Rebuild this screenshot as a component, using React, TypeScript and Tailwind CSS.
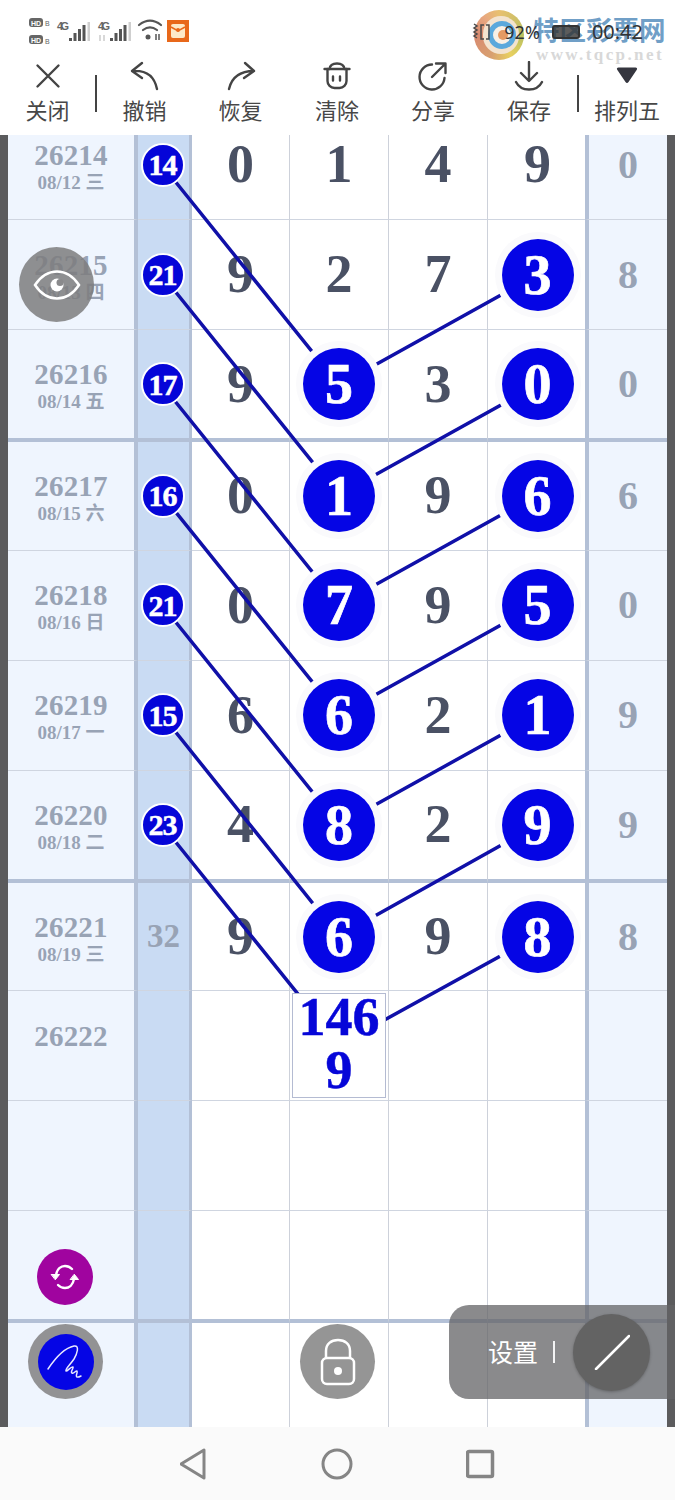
type Row = {
  issue?: string;
  date?: string;
  sum?: number;
  sumPlain?: boolean;
  cells?: (number | { ball: number } | "box" | null)[];
  last?: number;
  thick?: boolean;
  afterThick?: boolean;
};

const b = (ball: number) => ({ ball });

const rows: Row[] = [
  { issue: "26214", date: "08/12 三", sum: 14, cells: [0, 1, 4, 9], last: 0 },
  { issue: "26215", date: "08/13 四", sum: 21, cells: [9, 2, 7, b(3)], last: 8 },
  { issue: "26216", date: "08/14 五", sum: 17, cells: [9, b(5), 3, b(0)], last: 0, thick: true },
  { issue: "26217", date: "08/15 六", sum: 16, cells: [0, b(1), 9, b(6)], last: 6, afterThick: true },
  { issue: "26218", date: "08/16 日", sum: 21, cells: [0, b(7), 9, b(5)], last: 0 },
  { issue: "26219", date: "08/17 一", sum: 15, cells: [6, b(6), 2, b(1)], last: 9 },
  { issue: "26220", date: "08/18 二", sum: 23, cells: [4, b(8), 2, b(9)], last: 9, thick: true },
  { issue: "26221", date: "08/19 三", sum: 32, sumPlain: true, cells: [9, b(6), 9, b(8)], last: 8, afterThick: true },
  { issue: "26222", cells: [null, "box", null, null] },
  {},
  { thick: true },
  { afterThick: true },
];

const lines = [
  "162,165 339,385 537,275",
  "162,275 339,495 537,385",
  "162,385 339,605 537,495",
  "162,495 339,715 537,605",
  "162,605 339,825 537,715",
  "162,715 339,936 537,825",
  "162,825 339,1045 537,936",
];

function TableRow({ row }: { row: Row }) {
  const line = row.thick ? "border-b-4 border-b-[#b3c0d6]" : "border-b border-b-[#cfd5e0]";
  const height = row.thick ? "h-[112px]" : row.afterThick ? "h-[108.3px]" : "h-[110.15px]";
  return (
    <div className={`grid grid-cols-[130px_54px_98px_99px_99px_97px_82px] ${height}`}>
      <div className={`flex flex-col items-center justify-center border-r-4 border-r-[#b3c0d6] bg-[#eff5fe] pt-[5px] text-[#98a3b5] ${line}`}>
        <div className="text-[29px] leading-[30px] font-bold tracking-[0.2px]">{row.issue ?? "\u00a0"}</div>
        <div className="text-[19px] leading-[25px] font-bold">{row.date ?? "\u00a0"}</div>
      </div>
      <div className={`flex items-center justify-center border-r-[3px] border-r-[#b3c0d6] bg-[#c9dbf3] ${line}`}>
        {row.sum !== undefined && row.sumPlain && (
          <span className="text-[33px] font-bold text-[#98a3b5]">{row.sum}</span>
        )}
        {row.sum !== undefined && !row.sumPlain && (
          <span className="relative z-20 -ml-[2px] flex h-[44px] w-[44px] items-center justify-center rounded-full border-2 border-white bg-[#0505d8] text-[30px] font-bold tracking-[-1px] text-white [-webkit-text-stroke:0.5px_white]">
            {row.sum}
          </span>
        )}
      </div>
      {(row.cells ?? [null, null, null, null]).map((cell, i) => (
        <div
          key={i}
          className={`flex items-center justify-center bg-white text-[54px] font-bold text-[#4a5164] ${line} ${i < 3 ? "border-r border-r-[#cdd1da]" : "pl-[2px]"}`}
        >
          {typeof cell === "number" && cell}
          {cell === "box" && (
            <div className="relative z-20 flex h-[105px] w-[94px] flex-col items-center justify-center border border-[#b4bbd2] bg-white pb-[4px] text-[54px] leading-[53px] text-[#0606d8] [-webkit-text-stroke:0.5px_#0606d8]">
              <span>146</span>
              <span>9</span>
            </div>
          )}
          {typeof cell === "object" && cell !== null && (
            <span className="relative z-20 flex h-[72px] w-[72px] items-center justify-center rounded-full bg-[#0505e5] text-[56px] text-white shadow-[0_0_0_7px_#fafafc] [-webkit-text-stroke:0.7px_white]">
              {cell.ball}
            </span>
          )}
        </div>
      ))}
      <div className={`flex items-center justify-center border-l-4 border-l-[#b3c0d6] bg-[#eff5fe] text-[40px] font-bold text-[#98a3b5] ${line}`}>
        {row.last}
      </div>
    </div>
  );
}

function ToolItem({ label, width, children }: { label: string; width: string; children: React.ReactNode }) {
  return (
    <div className={`flex flex-col items-center pt-[8px] ${width}`}>
      <div className="flex h-[36px] items-center justify-center">{children}</div>
      <div className="text-[22px] leading-[30px] text-[#474747]">{label}</div>
    </div>
  );
}

function Signal({ x }: { x: number }) {
  return (
    <g transform={`translate(${x} 0)`}>
      <rect x="0" y="24" width="3" height="3" fill="#555" />
      <rect x="4.500" y="19" width="3" height="8" fill="#555" />
      <rect x="9" y="15" width="3" height="12" fill="#555" />
      <rect x="13.500" y="11" width="3" height="16" fill="#555" />
      <rect x="18.500" y="8" width="2.500" height="19" fill="#cfcfcf" />
    </g>
  );
}

function StatusIcons() {
  return (
    <svg width="165" height="32" viewBox="0 0 165 32">
      <rect x="0" y="4" width="14" height="9" rx="3" fill="#666" />
      <rect x="0" y="21" width="14" height="9" rx="3" fill="#666" />
      <text x="2" y="11.500" fontSize="7" fontWeight="700" fill="#fff" fontFamily="Liberation Sans">HD</text>
      <text x="2" y="28.500" fontSize="7" fontWeight="700" fill="#fff" fontFamily="Liberation Sans">HD</text>
      <text x="16" y="12" fontSize="7" fill="#666" fontFamily="Liberation Sans">B</text>
      <text x="16" y="30" fontSize="7" fill="#666" fontFamily="Liberation Sans">B</text>
      <text x="28" y="16" fontSize="11" fontWeight="700" fill="#666" fontFamily="Liberation Sans" textLength="12">4G</text>
      <Signal x={40} />
      <text x="69" y="16" fontSize="11" fontWeight="700" fill="#666" fontFamily="Liberation Sans" textLength="12">4G</text>
      <path d="M71 21v6M75 21v6" stroke="#ccc" strokeWidth="1.500" />
      <Signal x={81} />
      <g fill="none" stroke="#555" strokeWidth="2.200" strokeLinecap="round">
        <path d="M110 11c7-5.500 15-5.500 22 0" />
        <path d="M114 16c4.500-3.500 9.500-3.500 14 0" />
      </g>
      <circle cx="119" cy="23" r="2.500" fill="#555" />
      <path d="M127 20v6M130 20v6" stroke="#555" strokeWidth="1.500" />
      <rect x="138" y="6" width="22" height="22" fill="#e8681a" />
      <rect x="142" y="10" width="14" height="14" rx="2" fill="#fde9c8" />
      <path d="M142 13l7 4 7-4" fill="none" stroke="#e8681a" strokeWidth="1.500" />
      <circle cx="149" cy="16" r="2" fill="#e8681a" />
    </svg>
  );
}

export default function App() {
  return (
    <div className="relative h-[1500px] w-[675px] overflow-hidden bg-white font-['Liberation_Serif','Noto_Sans_CJK_SC',serif]">
      {/* status bar */}
      <div className="flex h-[50px] items-center justify-between pt-[10px] pl-[29px] font-['Noto_Sans','Noto_Sans_CJK_SC',sans-serif]">
        <StatusIcons />
        <div className="relative z-40 mt-[4px] flex items-center pr-[32px] text-[#333]">
          <svg width="20" height="20" viewBox="0 0 20 20" fill="none" stroke="#4a4a4a" strokeWidth="1.500" className="mr-[12px]">
            <path d="M2 2l3 2-3 2 3 2-3 2 3 2-3 2 3 2" />
            <path d="M12 3H9v14h3M14 3h3v14h-3" />
          </svg>
          <span className="text-[18px] leading-[24px]">92%</span>
          <span className="mx-[12px] flex h-[14px] w-[28px] items-center rounded-[3px] border-2 border-[#333] bg-[#333]/80" />
          <span className="text-[20px] leading-[24px]">00:42</span>
        </div>
      </div>

      {/* toolbar */}
      <div className="flex h-[85px] items-start font-['Noto_Sans_CJK_SC','Noto_Sans',sans-serif]">
        <ToolItem label="关闭" width="w-[95px]">
          <svg width="28" height="28" viewBox="0 0 28 28" fill="none" stroke="#444" strokeWidth="2.400" strokeLinecap="round">
            <path d="M3.500 3.500l21 21M24.500 3.500l-21 21" />
          </svg>
        </ToolItem>
        <div className="mt-[25px] h-[37px] w-[2px] bg-[#444]" />
        <ToolItem label="撤销" width="w-[95px]">
          <svg width="30" height="30" viewBox="0 0 30 30" fill="none" stroke="#444" strokeWidth="2.400" strokeLinecap="round" strokeLinejoin="round">
            <path d="M12 2L2 10l10 7M2 10c12-1 22 3 25 18" />
          </svg>
        </ToolItem>
        <ToolItem label="恢复" width="w-[97px]">
          <svg width="30" height="30" viewBox="0 0 30 30" fill="none" stroke="#444" strokeWidth="2.400" strokeLinecap="round" strokeLinejoin="round">
            <path d="M19 2l9 8-10 7M28 10C16 10 6 15 3 28" />
          </svg>
        </ToolItem>
        <ToolItem label="清除" width="w-[96px]">
          <svg width="28" height="28" viewBox="0 0 28 28" fill="none" stroke="#444" strokeWidth="2.400" strokeLinecap="round" strokeLinejoin="round">
            <path d="M1.500 7h25" />
            <path d="M4.500 7v12a7 7 0 0 0 7 7h5a7 7 0 0 0 7-7V7" />
            <path d="M6.500 7C7 3 10 1.500 14 1.500S21 3 21.500 7" />
            <path d="M10 14.500v4M17 14.500v4" />
          </svg>
        </ToolItem>
        <ToolItem label="分享" width="w-[96px]">
          <svg width="30" height="30" viewBox="0 0 30 30" fill="none" stroke="#444" strokeWidth="2.400" strokeLinecap="round" strokeLinejoin="round">
            <path d="M14 3.500A12.500 12.500 0 1 0 26.500 17" />
            <path d="M14 16L27 3M18 2.500h9.500V12" />
          </svg>
        </ToolItem>
        <ToolItem label="保存" width="w-[96px]">
          <svg width="30" height="30" viewBox="0 0 30 30" fill="none" stroke="#444" strokeWidth="2.400" strokeLinecap="round" strokeLinejoin="round">
            <path d="M15 1v18M7 12l8 8 8-8M2 21c3 6 8 7.500 13 7.500s10-1.500 13-7.500" />
          </svg>
        </ToolItem>
        <div className="mt-[25px] h-[37px] w-[2px] bg-[#444]" />
        <ToolItem label="排列五" width="w-[96px]">
          <svg width="22" height="18" viewBox="0 0 22 18" className="-mt-[2px]">
            <path d="M2.500 1.500h17c1.500 0 2 1 1.300 2.200L12.500 16c-.8 1.200-2.200 1.200-3 0L1.200 3.700C.5 2.500 1 1.500 2.500 1.500z" fill="#35363f" />
          </svg>
        </ToolItem>
      </div>

      {/* chart */}
      <div className="h-[1292px] overflow-hidden bg-white">
        <div className="-mt-[25px] flex">
          <div className="w-[8px] shrink-0 bg-[#5b5b5d]" />
          <div className="w-[659px] shrink-0">
            {rows.map((row, i) => (
              <TableRow key={i} row={row} />
            ))}
          </div>
          <div className="w-[8px] shrink-0 bg-[#5b5b5d]" />
        </div>
      </div>

      {/* nav bar */}
      <div className="flex h-[73px] items-center justify-center gap-[113px] bg-[#fafafa]">
        <svg width="28" height="32" viewBox="0 0 28 32" fill="none" stroke="#858585" strokeWidth="3" strokeLinejoin="round">
          <path d="M24 2v28L1 16z" />
        </svg>
        <svg width="32" height="32" viewBox="0 0 32 32" fill="none" stroke="#858585" strokeWidth="3">
          <circle cx="16" cy="16" r="14" />
        </svg>
        <svg width="30" height="30" viewBox="0 0 30 30" fill="none" stroke="#858585" strokeWidth="3.500" strokeLinejoin="round">
          <rect x="1.500" y="2.500" width="25" height="25" rx="1.500" />
        </svg>
      </div>

      {/* connecting lines */}
      <svg className="pointer-events-none absolute top-0 left-0 z-10" width="675" height="1500" viewBox="0 0 675 1500" fill="none">
        {lines.map((points) => (
          <polyline key={points} points={points} stroke="#1010a8" strokeWidth="3.500" />
        ))}
      </svg>

      {/* watermark */}
      <div className="absolute top-[10px] left-[474px] z-30 h-[50px] w-[50px] rounded-full bg-[conic-gradient(#e8c070,#b8c060_90deg,#e8d060_150deg,#d8a070_200deg,#d88a70_270deg,#e8a880_320deg,#e8c070)]">
        <div className="absolute top-[6px] left-[9px] h-[38px] w-[36px] rounded-full bg-[#f3e3cf]" />
        <div className="absolute top-[11px] left-[14px] h-[28px] w-[28px] rounded-full border-[5px] border-[#5aa8dc] bg-[#f8f0e6]" />
        <div className="absolute top-[20px] left-[24px] h-[10px] w-[10px] rounded-full bg-[#e59a63]" />
      </div>
      <div className="absolute top-[10px] left-[533px] z-30 font-['Noto_Sans_CJK_SC',sans-serif] text-[26.500px] leading-[38px] font-bold whitespace-nowrap text-[#2f74ae]/70">
        特区彩票网
      </div>
      <div className="absolute top-[45px] left-[536px] z-30 text-[17px] leading-[20px] font-bold tracking-[2.400px] whitespace-nowrap text-[#d8d8d8]">
        www.tqcp.net
      </div>

      {/* floating buttons */}
      <div className="absolute top-[247px] left-[19px] z-30 flex h-[75px] w-[75px] items-center justify-center rounded-full bg-[#7c7c7e]/85">
        <svg width="48" height="32" viewBox="0 0 48 32" fill="none">
          <path d="M2 16C8 7 15 2.500 24 2.500S40 7 46 16c-6 9-13 13.500-22 13.500S8 25 2 16z" stroke="#fff" strokeWidth="2.500" />
          <circle cx="24" cy="16" r="6.500" fill="#fff" />
          <circle cx="27" cy="13.500" r="3.500" fill="#8a8a8c" />
        </svg>
      </div>
      <div className="absolute top-[1249px] left-[37px] z-30 flex h-[56px] w-[56px] items-center justify-center rounded-full bg-[#a0049f]">
        <svg width="30" height="26" viewBox="0 0 30 26" fill="none" stroke="#fff" strokeWidth="2.400" strokeLinecap="round">
          <path d="M6 11C7 5 11 2 15 2c3 0 5 1 7 3" />
          <path d="M24 15c-1 6-5 9-9 9-3 0-5-1-7-3" />
          <path d="M1.500 10.500h8l-4 5z" fill="#fff" strokeWidth="1" strokeLinejoin="round" />
          <path d="M20.500 15.500h8l-4-5z" fill="#fff" strokeWidth="1" strokeLinejoin="round" />
        </svg>
      </div>
      <div className="absolute top-[1324px] left-[28px] z-30 flex h-[75px] w-[75px] items-center justify-center rounded-full bg-[#929294]">
        <div className="h-[56px] w-[56px] rounded-full bg-[#0505e5]">
          <svg width="56" height="56" viewBox="0 0 56 56" fill="none" stroke="#e8e8ff" strokeWidth="1.500" strokeLinecap="round" strokeLinejoin="round">
            <path d="M10 35C16 26 26 14 36 12c6-1 3 8 0 13-4 6-9 10-8 12 1 1 5-5 7-4 1 1-3 5-1 6 2 1 4-3 5-2 1 2-2 5 0 6 1 .5 3-.5 4-1" />
          </svg>
        </div>
      </div>
      <div className="absolute top-[1324px] left-[300px] z-30 flex h-[75px] w-[75px] items-center justify-center rounded-full bg-[#959595]">
        <svg width="36" height="48" viewBox="0 0 36 48" fill="none" stroke="#fff" strokeWidth="2.500">
          <path d="M6 20V13C6 6 11 2 18 2s12 4 12 11v7" />
          <rect x="2" y="20" width="32" height="26" rx="5" />
          <circle cx="18" cy="33" r="4" fill="#fff" stroke="none" />
        </svg>
      </div>
      <div className="absolute top-[1305px] left-[449px] z-30 flex h-[94px] w-[226px] items-center rounded-l-[20px] bg-[#636366]/75 pl-[39px] font-['Noto_Sans_CJK_SC',sans-serif] text-[25px] text-white">
        <span>设置</span>
        <span className="ml-[15px] h-[22px] w-[2px] bg-white/90" />
        <div className="absolute top-[9px] left-[124px] flex h-[77px] w-[77px] items-center justify-center rounded-full bg-[#636363] shadow-[0_1px_3px_rgba(0,0,0,0.25)]">
          <svg width="36" height="36" viewBox="0 0 36 36" stroke="#fff" strokeWidth="2.500" strokeLinecap="round" className="-mt-[2px]">
            <path d="M2 35L35 2" />
          </svg>
        </div>
      </div>
    </div>
  );
}
